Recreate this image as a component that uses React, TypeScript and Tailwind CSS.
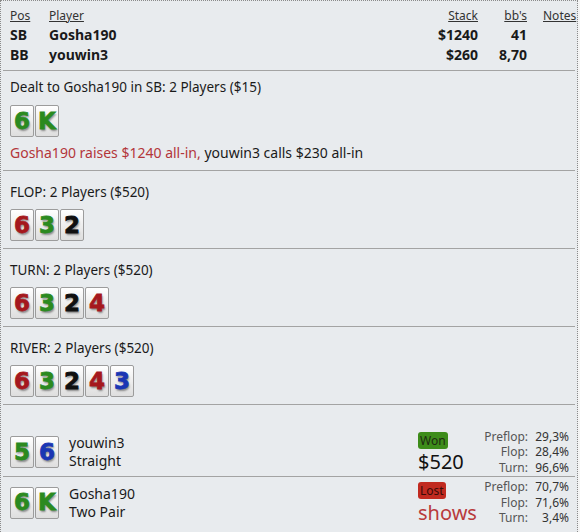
import React from "react";

type Suit = "h" | "c" | "s" | "d";
type CardT = { r: string; s: Suit };

const suitColor: Record<Suit, string> = {
  h: "text-[#a5181d]",
  c: "text-[#2b8a1f]",
  s: "text-[#101010]",
  d: "text-[#1a36b4]",
};

function Card({ card }: { card: CardT }) {
  return (
    <div
      className={`flex h-[32px] w-[24px] items-center justify-center rounded-[2px] border border-[#9c9c9c] bg-linear-to-b from-white to-[#dedede] font-['DejaVu_Sans',sans-serif] text-[23px] font-bold leading-none [-webkit-text-stroke:0.8px_currentColor] [text-shadow:1px_2px_2px_rgba(0,0,0,0.4)] ${suitColor[card.s]}`}
    >
      {card.r}
    </div>
  );
}

function Cards({ cards }: { cards: CardT[] }) {
  return (
    <div className="flex gap-[1px]">
      {cards.map((c, i) => (
        <Card key={i} card={c} />
      ))}
    </div>
  );
}

function Street({ title, cards }: { title: string; cards: CardT[] }) {
  return (
    <div className="border-b border-[#a3a3a3] pl-[7px] pt-[11px] pb-[7px]">
      <div className="h-[20px] leading-[20px]">{title}</div>
      <div className="mt-[7px]">
        <Cards cards={cards} />
      </div>
    </div>
  );
}

function Stats({ rows }: { rows: [string, string][] }) {
  return (
    <div className="grid grid-cols-[48px_41px] text-[12px] leading-[15.5px]">
      {rows.map(([k, v]) => (
        <React.Fragment key={k}>
          <div className="text-right text-[#555]">{k}</div>
          <div className="text-right text-[#333]">{v}</div>
        </React.Fragment>
      ))}
    </div>
  );
}

export default function App() {
  const board: CardT[] = [
    { r: "6", s: "h" },
    { r: "3", s: "c" },
    { r: "2", s: "s" },
    { r: "4", s: "h" },
    { r: "3", s: "d" },
  ];

  return (
    <div className="h-[532px] w-[580px] overflow-hidden bg-[#f4f4f4]">
      <div className="h-[560px] w-[578px] border border-dotted border-[#8a8a8a] bg-[#e8ebee] px-[2px] font-['Noto_Sans',sans-serif] text-[13.5px] text-[#1a1a1a]">
        {/* seats */}
        <div className="border-b border-[#a3a3a3] pl-[7px] pt-[6px] pb-[5px]">
          <div className="flex h-[18px] items-center text-[12px] text-[#333] underline">
            <div className="w-[39px]">Pos</div>
            <div className="flex-1">Player</div>
            <div className="w-[80px] text-right">Stack</div>
            <div className="w-[49px] text-right">bb's</div>
            <div className="w-[48px] pl-[16px]">Notes</div>
          </div>
          <div className="flex h-[18px] items-center text-[14px] font-bold">
            <div className="w-[39px]">SB</div>
            <div className="flex-1">Gosha190</div>
            <div className="w-[80px] text-right">$1240</div>
            <div className="w-[49px] text-right">41</div>
            <div className="w-[48px]" />
          </div>
          <div className="flex h-[22px] items-center text-[14px] font-bold">
            <div className="w-[39px]">BB</div>
            <div className="flex-1">youwin3</div>
            <div className="w-[80px] text-right">$260</div>
            <div className="w-[49px] text-right">8,70</div>
            <div className="w-[48px]" />
          </div>
        </div>

        {/* preflop */}
        <div className="border-b border-[#a3a3a3] pl-[7px] pt-[6px] pb-[7px]">
          <div className="h-[20px] leading-[20px]">Dealt to Gosha190 in SB: 2 Players ($15)</div>
          <div className="mt-[8px]">
            <Cards cards={[{ r: "6", s: "c" }, { r: "K", s: "c" }]} />
          </div>
          <div className="mt-[6px] h-[20px] text-[14px] leading-[20px]">
            <span className="text-[#b3363a]">Gosha190 raises $1240 all-in,</span> youwin3 calls $230 all-in
          </div>
        </div>

        <Street title="FLOP: 2 Players ($520)" cards={board.slice(0, 3)} />
        <Street title="TURN: 2 Players ($520)" cards={board.slice(0, 4)} />
        <Street title="RIVER: 2 Players ($520)" cards={board} />

        {/* showdown */}
        <div className="pt-[23px]">
          <div className="flex h-[49px] items-center border-b border-[#a3a3a3] pl-[7px]">
            <Cards cards={[{ r: "5", s: "c" }, { r: "6", s: "d" }]} />
            <div className="ml-[10px] flex-1 text-[14px] leading-[18px]">
              <div>youwin3</div>
              <div>Straight</div>
            </div>
            <div className="w-[62px]">
              <span className="inline-block rounded-[3px] bg-[#3d8c1a] px-[2px] text-[12px] leading-[17px] text-[#1d2a12]">Won</span>
              <div className="text-[20px] leading-[24px] text-[#111]">$520</div>
            </div>
            <div className="mr-[6px]">
              <Stats rows={[["Preflop:", "29,3%"], ["Flop:", "28,4%"], ["Turn:", "96,6%"]]} />
            </div>
          </div>
          <div className="flex h-[51px] items-center pl-[7px]">
            <Cards cards={[{ r: "6", s: "c" }, { r: "K", s: "c" }]} />
            <div className="ml-[10px] flex-1 text-[14px] leading-[18px]">
              <div>Gosha190</div>
              <div>Two Pair</div>
            </div>
            <div className="w-[62px]">
              <span className="inline-block rounded-[3px] bg-[#c12a20] px-[2px] text-[12px] leading-[17px] text-[#3a0b08]">Lost</span>
              <div className="text-[20px] leading-[24px] text-[#b83a3c]">shows</div>
            </div>
            <div className="mr-[6px]">
              <Stats rows={[["Preflop:", "70,7%"], ["Flop:", "71,6%"], ["Turn:", "3,4%"]]} />
            </div>
          </div>
        </div>
      </div>
    </div>
  );
}
